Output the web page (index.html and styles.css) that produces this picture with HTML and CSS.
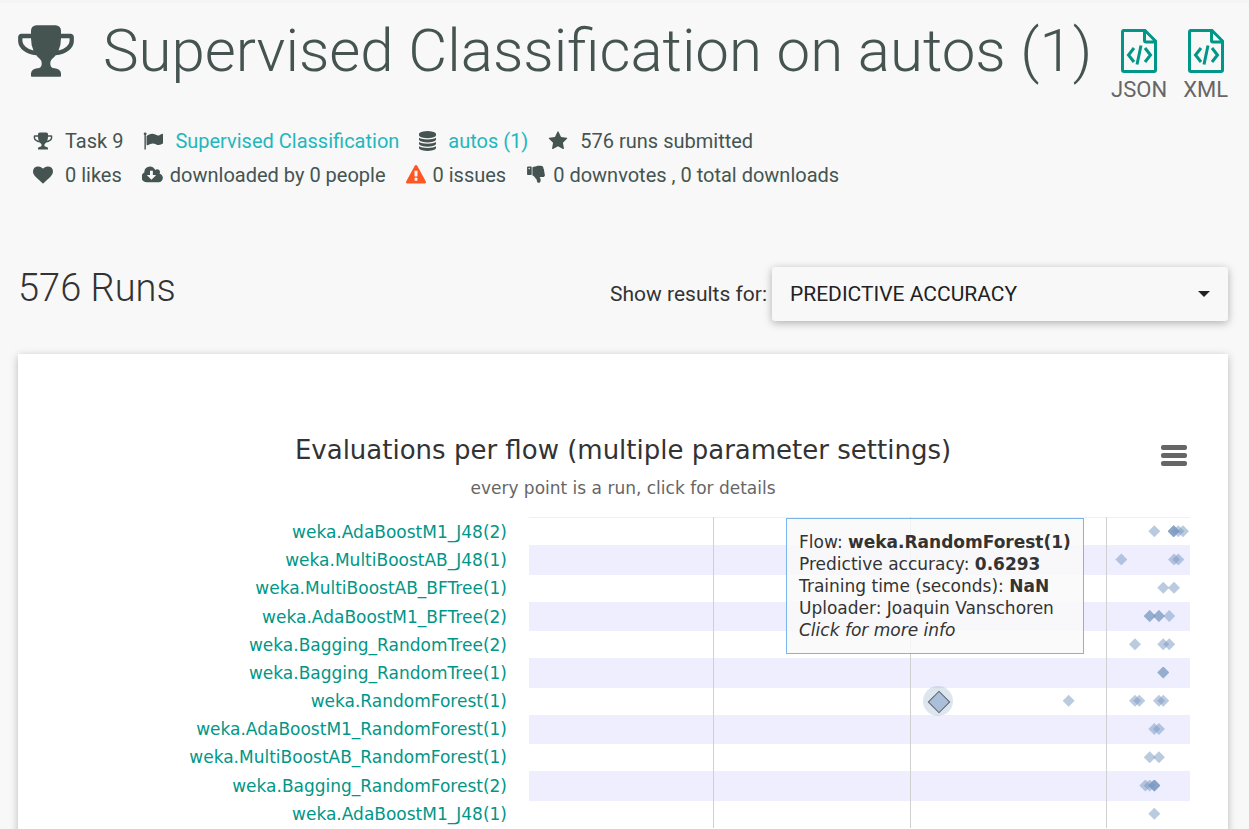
FILE: index.html
```html
<!DOCTYPE html>
<html lang="en">

<head>
    <meta charset="UTF-8">
    <meta name="viewport" content="width=device-width, initial-scale=1.0">
    <title>Supervised Classification on autos (1)</title>
    <link rel="stylesheet" href="styles.css">
</head>

<body>
    <svg class="sprite" aria-hidden="true">
        <symbol id="trophy" viewBox="64 0 1664 1792">
            <path d="M522 883q-74-162-74-371h-256v96q0 78 94.5 162t235.5 113zm1078-275v-96h-256q0 209-74 371 141-29 235.5-113t94.5-162zm128-128v128q0 71-41.5 143t-112 130-173 97.5-215.5 44.5q-42 54-95 95-38 34-52.5 72.5t-14.5 89.5q0 54 30.5 91t97.5 37q75 0 133.5 45.5t58.5 114.5v64q0 14-9 23t-23 9h-832q-14 0-23-9t-9-23v-64q0-69 58.5-114.5t133.5-45.5q67 0 97.5-37t30.5-91q0-51-14.5-89.5t-52.5-72.5q-53-41-95-95-113-5-215.5-44.5t-173-97.5-112-130-41.5-143v-128q0-40 28-68t68-28h288v-96q0-66 47-113t113-47h576q66 0 113 47t47 113v96h288q40 0 68 28t28 68z" />
        </symbol>
        <symbol id="file-code" viewBox="0 0 36 44">
            <path d="M2 1.5h22L34.5 12v29q0 1.5-1.5 1.5H3q-1.500 0-1.500-1.500V3q0-1.500 1.500-1.500zM23.500 2v9.500q0 1.500 1.500 1.500h9.500M13 19l-5.500 7 5.500 7M24 19l5.500 7-5.500 7M20 16.500l-4 19" fill="none" stroke="currentColor" stroke-width="3" />
        </symbol>
    </svg>

    <div class="header">
        <svg class="trophy"><use href="#trophy" /></svg>
        <h1>Supervised Classification on autos (1)</h1>
        <div class="exports">
            <a href="#json"><svg class="file-icon"><use href="#file-code" /></svg>JSON</a>
            <a href="#xml"><svg class="file-icon"><use href="#file-code" /></svg>XML</a>
        </div>
    </div>

    <div class="stats">
        <div class="stats-row wide">
            <span class="stat"><svg class="icon"><use href="#trophy" /></svg>Task 9</span>
            <span class="stat">
                <svg class="icon" viewBox="0 0 1792 1792"><path d="M320 256q0 72-64 110v1266q0 13-9.5 22.5t-22.5 9.5h-64q-13 0-22.5-9.5t-9.5-22.5v-1266q-64-38-64-110 0-53 37.5-90.5t90.5-37.5 90.5 37.5 37.5 90.5zm1472 64v763q0 25-12.5 38.5t-39.5 27.5q-215 116-369 116-61 0-123.5-22t-108.5-48-115.5-48-142.5-22q-192 0-464 146-17 9-33 9-26 0-45-19t-19-45v-742q0-32 31-55 21-14 79-43 236-120 421-120 107 0 200 29t219 88q38 19 88 19 54 0 117.5-21t110-47 88-47 54.5-21q26 0 45 19t19 45z" /></svg>
                <a href="#type">Supervised Classification</a>
            </span>
            <span class="stat">
                <svg class="icon database" viewBox="128 0 1536 1792"><path d="M896 768q237 0 443-43t325-127v170q0 69-103 128t-280 93.5-385 34.5-385-34.5-280-93.5-103-128v-170q119 84 325 127t443 43zm0 768q237 0 443-43t325-127v170q0 69-103 128t-280 93.5-385 34.5-385-34.5-280-93.5-103-128v-170q119 84 325 127t443 43zm0-384q237 0 443-43t325-127v170q0 69-103 128t-280 93.5-385 34.5-385-34.5-280-93.5-103-128v-170q119 84 325 127t443 43zm0-1152q208 0 385 34.5t280 93.5 103 128v128q0 69-103 128t-280 93.5-385 34.5-385-34.5-280-93.5-103-128v-128q0-69 103-128t280-93.5 385-34.5z" /></svg>
                <a href="#data">autos (1)</a>
            </span>
            <span class="stat">
                <svg class="icon" viewBox="64 0 1664 1792"><path d="M1728 647q0 22-26 48l-363 354 86 500q1 7 1 20 0 21-10.5 35.5t-30.5 14.5q-19 0-40-12l-449-236-449 236q-22 12-40 12-21 0-31.5-14.5t-10.5-35.5q0-6 2-20l86-500-364-354q-25-27-25-48 0-37 56-46l502-73 225-455q19-41 49-41t49 41l225 455 502 73q56 9 56 46z" /></svg>
                576 runs submitted
            </span>
        </div>
        <div class="stats-row">
            <span class="stat heart">
                <svg class="icon" viewBox="0 0 1792 1792"><path d="M896 1664q-26 0-44-18l-624-602q-10-8-27.5-26t-55.5-65.5-68-97.5-53.5-121-23.5-138q0-220 127-344t351-124q62 0 126.5 21.5t120 58 95.5 68.5 76 68q36-36 76-68t95.5-68.5 120-58 126.5-21.5q224 0 351 124t127 344q0 221-229 450l-623 600q-18 18-44 18z" /></svg>
                0 likes
            </span>
            <span class="stat">
                <svg class="icon cloud" viewBox="0 0 1856 1792"><path d="M1216 928q0-14-9-23t-23-9h-224v-352q0-13-9.5-22.5t-22.5-9.5h-192q-13 0-22.5 9.5t-9.5 22.5v352h-224q-13 0-22.5 9.5t-9.5 22.5q0 14 9 23l352 352q9 9 23 9t23-9l351-351q10-12 10-24zm640 224q0 159-112.5 271.5t-271.5 112.5h-1088q-185 0-316.5-131.5t-131.5-316.5q0-130 70-240t188-165q-2-30-2-43 0-212 150-362t362-150q156 0 285.5 87t188.5 231q71-62 166-62 106 0 181 75t75 181q0 76-41 138 130 31 213.5 135.5t83.5 238.5z" /></svg>
                downloaded by 0 people
            </span>
            <span class="stat">
                <svg class="icon warning" viewBox="0 0 1792 1792"><path d="M1024 1375v-190q0-14-9.5-23.5t-22.5-9.5h-192q-13 0-22.5 9.5t-9.5 23.5v190q0 14 9.5 23.5t22.5 9.5h192q13 0 22.500-9.500t9.500-23.500zm-2-374l18-459q0-12-10-19-13-11-24-11h-220q-11 0-24 11-10 7-10 21l17 457q0 10 10 16.500t24 6.500h185q14 0 23.500-6.500t10.500-16.500zm-14-934l768 1408q35 63-2 126-17 29-46.500 46t-63.500 17h-1536q-34 0-63.500-17t-46.500-46q-37-63-2-126l768-1408q17-31 47-49t65-18 65 18 47 49z" /></svg>
                0 issues
            </span>
            <span class="stat">
                <svg class="icon" viewBox="64 -128 1600 1792"><path d="M320 192q0-26-19-45t-45-19q-27 0-45.5 19t-18.5 45q0 27 18.5 45.5t45.5 18.5q26 0 45-18.5t19-45.5zm160-128v640q0 26-19 45t-45 19h-288q-26 0-45-19t-19-45v-640q0-26 19-45t45-19h288q26 0 45 19t19 45zm1129 549q55 61 55 149-1 78-57.5 135t-134.500 57h-277q4 14 8 24t11 22 10 18q18 37 27 57t19 58.500 10 76.500q0 24-.5 39t-5 45-12 50-24 45-40 40.500-60 26-82.500 10.500q-26 0-45-19-20-20-34-50t-19.500-52-12.500-61q-9-42-13.500-60.500t-17.500-48.500-31-48q-33-33-101-120-49-64-101-121t-76-59q-25-2-43-20.500t-18-43.500v-641q0-26 19-44.500t45-19.500q35-1 158-44 77-26 120.500-39.500t121.500-29 144-15.500h129q133 2 197 78 58 69 49 181 39 37 54 94 17 61 0 117 46 61 43 137 0 32-15 76z" /></svg>
                0 downvotes , 0 total downloads
            </span>
        </div>
    </div>

    <div class="toolbar">
        <h2>576 Runs</h2>
        <div class="measure">
            <label for="measure">Show results for:</label>
            <div class="select-wrap">
                <select id="measure">
                    <option>PREDICTIVE ACCURACY</option>
                </select>
            </div>
        </div>
    </div>

    <div class="card">
        <div class="chart-header">
            <h3>Evaluations per flow (multiple parameter settings)</h3>
            <p>every point is a run, click for details</p>
            <button class="menu-btn" aria-label="Chart menu"><span></span><span></span><span></span></button>
        </div>
        <div class="chart">
            <div id="labels" class="labels"></div>
            <div class="plot">
                <div id="bands" class="bands"></div>
                <div id="grid"></div>
                <div id="points"></div>
                <div class="tooltip">
                    Flow: <b>weka.RandomForest(1)</b><br>
                    Predictive accuracy: <b>0.6293</b><br>
                    Training time (seconds): <b>NaN</b><br>
                    Uploader: Joaquin Vanschoren<br>
                    <i>Click for more info</i>
                </div>
            </div>
        </div>
    </div>

    <script src="script.js"></script>
</body>

</html>
```

FILE: styles.css
```css
* {
    box-sizing: border-box;
}

body {
    font-family: Roboto, sans-serif;
    font-size: 20px;
    background-color: #f8f8f8;
    border-top: 3px solid #f5f5f5;
    color: #455451;
    margin: 0;
    padding: 0 21px 0 18px;
}

h1, h2, h3, p {
    margin: 0;
    font-weight: normal;
}

a {
    color: #23b7bd;
    text-decoration: none;
}

svg {
    fill: currentColor;
}

.sprite {
    display: none;
}

.header {
    display: flex;
    align-items: flex-start;
    padding-top: 14px;
}

.trophy {
    width: 56px;
    height: 60px;
    margin-top: 4px;
    flex: none;
}

h1 {
    flex: 1;
    margin-left: 29px;
    font-size: 60px;
    font-weight: 300;
    line-height: 68px;
    white-space: nowrap;
}

.exports {
    display: flex;
    gap: 16px;
    padding-top: 12px;
}

.exports a {
    display: flex;
    flex-direction: column;
    align-items: center;
    font-size: 22px;
    line-height: 26px;
    color: #666;
}

.file-icon {
    width: 36px;
    height: 44px;
    margin-bottom: 4px;
    color: #009688;
}

.stats {
    padding: 21px 15px 0;
}

.stats-row {
    display: flex;
    flex-wrap: wrap;
    gap: 20px;
    line-height: 34px;
}

.stat {
    display: flex;
    align-items: center;
    gap: 7px;
}

.wide .stat, .heart {
    gap: 12px;
}

.icon {
    width: 20px;
    height: 20px;
}

.icon.database {
    width: 17px;
}

.icon.cloud {
    width: 21px;
}

.warning {
    color: #ff5722;
}

.toolbar {
    display: flex;
    justify-content: space-between;
    align-items: center;
    margin-top: 74px;
}

h2 {
    font-size: 38px;
    font-weight: 300;
    line-height: 44px;
    margin-bottom: 12px;
    color: #333;
}

.measure {
    display: flex;
    align-items: center;
    gap: 5px;
    font-size: 21px;
    color: #333;
}

.select-wrap {
    position: relative;
    width: 456px;
}

.select-wrap::after {
    content: "";
    position: absolute;
    right: 18px;
    top: 24px;
    border: 6px solid transparent;
    border-top-color: #222;
    border-bottom: 0;
    pointer-events: none;
}

select {
    appearance: none;
    width: 100%;
    height: 54px;
    padding: 0 18px;
    font-family: inherit;
    font-size: 21px;
    color: #222;
    background-color: #f8f8f8;
    border: none;
    border-radius: 3px;
    box-shadow: 0 2px 8px rgba(0, 0, 0, 0.3);
}

.card {
    margin-top: 32px;
    padding: 80px 38px 40px 0;
    background-color: #fff;
    box-shadow: 0 2px 8px rgba(0, 0, 0, 0.25);
    font-family: "DejaVu Sans", sans-serif;
}

.chart-header {
    position: relative;
    padding-left: 38px;
    text-align: center;
}

h3 {
    font-size: 26px;
    line-height: 32px;
    color: #333;
}

.chart-header p {
    margin-top: 10px;
    font-size: 17px;
    line-height: 24px;
    color: #666;
}

.menu-btn {
    position: absolute;
    top: 11px;
    right: 3px;
    display: flex;
    flex-direction: column;
    gap: 3px;
    padding: 0;
    background: none;
    border: none;
    cursor: pointer;
}

.menu-btn span {
    width: 26px;
    height: 5px;
    border-radius: 2px;
    background-color: #666;
}

.chart {
    display: flex;
    height: 311px;
    margin-top: 17px;
}

.labels, .bands {
    display: grid;
    grid-auto-rows: 1fr;
    height: 100%;
}

.labels {
    width: 511px;
    padding-top: 1px;
    padding-right: 22px;
    text-align: right;
    font-size: 17px;
    line-height: 28px;
}

.labels a {
    color: #009688;
}

.plot {
    position: relative;
    flex: 1;
}

.band {
    border-top: 1px solid #eef;
}

.band:nth-child(even) {
    background-color: #eef;
    box-shadow: 0 1px 0 #eef;
}

.grid-line {
    position: absolute;
    top: 0;
    bottom: 0;
    width: 1px;
    background-color: #d0d0d0;
}

.point {
    position: absolute;
    width: 12px;
    height: 12px;
    margin: -6px;
    background-color: rgba(119, 152, 191, 0.5);
    clip-path: polygon(50% 0, 100% 50%, 50% 100%, 0 50%);
}

.halo {
    position: absolute;
    width: 30px;
    height: 30px;
    margin: -15px;
    border-radius: 50%;
    background-color: rgba(119, 152, 191, 0.25);
}

.halo::after {
    content: "";
    position: absolute;
    top: 8px;
    left: 8px;
    width: 14px;
    height: 14px;
    border: 1px solid #666;
    background-color: #a9bfda;
    transform: rotate(45deg);
}

.tooltip {
    position: absolute;
    top: 1px;
    right: 106px;
    width: 298px;
    padding: 12px;
    border: 1px solid #7cb5ec;
    background-color: rgba(249, 249, 249, 0.85);
    color: #333;
    font-size: 17px;
    line-height: 22px;
    white-space: nowrap;
}
```

FILE: script.js
```js
const flows = [
    { name: 'weka.AdaBoostM1_J48(2)', runs: [0.8492, 0.8689, 0.8689, 0.8689, 0.8736, 0.8784] },
    { name: 'weka.MultiBoostAB_J48(1)', runs: [0.8156, 0.8692, 0.8736] },
    { name: 'weka.MultiBoostAB_BFTree(1)', runs: [0.8583, 0.8692] },
    { name: 'weka.AdaBoostM1_BFTree(2)', runs: [0.8445, 0.8445, 0.8539, 0.8539, 0.8644] },
    { name: 'weka.Bagging_RandomTree(2)', runs: [0.8295, 0.8583, 0.8644] },
    { name: 'weka.Bagging_RandomTree(1)', runs: [0.8583, 0.8583] },
    { name: 'weka.RandomForest(1)', runs: [0.762, 0.8295, 0.8339, 0.8539, 0.8583], selected: 0.6293 },
    { name: 'weka.AdaBoostM1_RandomForest(1)', runs: [0.8492, 0.8539] },
    { name: 'weka.MultiBoostAB_RandomForest(1)', runs: [0.8445, 0.8539] },
    { name: 'weka.Bagging_RandomForest(2)', runs: [0.84, 0.8445, 0.8492, 0.8492, 0.8492] },
    { name: 'weka.AdaBoostM1_J48(1)', runs: [0.8492] }
];

// visible range of the x axis
const min = 0.2127;
const max = 0.8855;

const toX = value => (value - min) / (max - min) * 100;

let labels = '';
let bands = '';
let points = '';

flows.forEach((flow, index) => {
    const y = (index + 0.5) / flows.length * 100;

    labels += `<a href="#flow">${flow.name}</a>`;
    bands += '<div class="band"></div>';
    flow.runs.forEach(run => {
        points += `<span class="point" style="left: ${toX(run)}%; top: ${y}%"></span>`;
    });
    if (flow.selected) {
        points += `<span class="halo" style="left: ${toX(flow.selected)}%; top: ${y}%"></span>`;
    }
});

document.getElementById('labels').innerHTML = labels;
document.getElementById('bands').innerHTML = bands;
document.getElementById('points').innerHTML = points;
document.getElementById('grid').innerHTML = [0.4, 0.6, 0.8]
    .map(tick => `<span class="grid-line" style="left: ${toX(tick)}%"></span>`)
    .join('');
```
